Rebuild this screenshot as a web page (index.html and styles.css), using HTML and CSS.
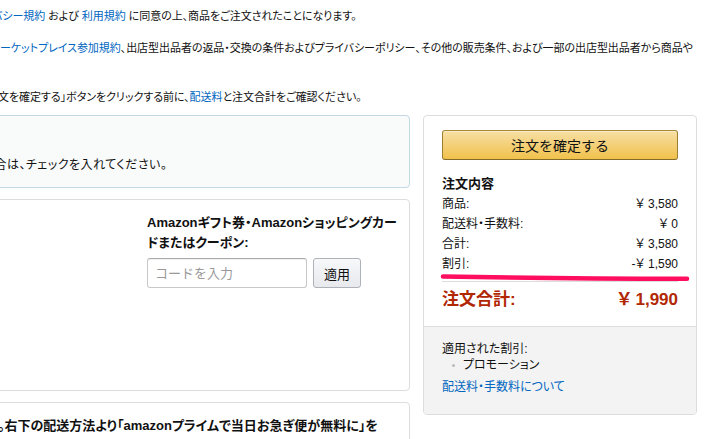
FILE: index.html
```html
<!DOCTYPE html>
<html lang="ja">
<head>
  <meta charset="UTF-8">
  <title>注文の確定</title>
  <link rel="stylesheet" href="styles.css">
</head>
<body>

<div class="page">
  <div class="notes">
    <p class="note note-first"><span class="cut">バ</span><a href="#">シー規約</a> および <a href="#">利用規約</a> に同意の上、商品をご注文されたことになります。</p>
    <p class="note note-second"><a href="#">ーケットプレイス参加規約</a>、出店型出品者の返品・交換の条件およびプライバシーポリシー、その他の販売条件、および一部の出店型出品者から商品や</p>
    <p class="note note-third">文を確定する」ボタンをクリックする前に、<a href="#">配送料</a>と注文合計をご確認ください。</p>
  </div>

  <div class="main">
    <div class="left">
      <div class="box box-info">
        <p class="info-text">場合は、チェックを入れてください。</p>
      </div>

      <div class="box box-gift">
        <div class="gift">
          <h4>Amazonギフト券・Amazonショッピングカー<br>ドまたはクーポン:</h4>
          <div class="gift-form">
            <input type="text" placeholder="コードを入力">
            <button class="btn-apply">適用</button>
          </div>
        </div>
      </div>

      <div class="box box-ship">
        <p class="ship-text">。右下の配送方法より「amazonプライムで当日お急ぎ便が無料に」を</p>
      </div>
    </div>

    <div class="summary">
      <div class="summary-top">
        <button class="btn-order">注文を確定する</button>
        <h3>注文内容</h3>
        <div class="row"><span>商品:</span><span>￥ 3,580</span></div>
        <div class="row"><span>配送料・手数料:</span><span>￥ 0</span></div>
        <div class="row"><span>合計:</span><span>￥ 3,580</span></div>
        <div class="row"><span>割引:</span><span>-￥ 1,590</span></div>
        <div class="total"><span>注文合計:</span><span>￥ 1,990</span></div>

        <!-- marker stroke drawn over the discount row -->
        <svg class="marker" width="250" height="12" viewBox="0 0 250 12">
          <path d="M3 4.5 Q 120 6.5 247 6.8" fill="none" stroke="#ff0d5f" stroke-width="4.6" stroke-linecap="round"/>
        </svg>
      </div>
      <div class="summary-bottom">
        <p>適用された割引:</p>
        <ul>
          <li>プロモーション</li>
        </ul>
        <a href="#">配送料・手数料について</a>
      </div>
    </div>
  </div>
</div>

</body>
</html>
```

FILE: styles.css
```css
body {
  margin: 0;
  font-family: "Liberation Sans", "Noto Sans CJK JP", sans-serif;
  font-size: 12px;
  font-feature-settings: "palt";
  color: #111;
  background: #fff;
  overflow: hidden;
  width: 715px;
  height: 439px;
}

a {
  color: #0066c0;
  text-decoration: none;
}

p {
  margin: 0;
}

.page {
  width: 715px;
}

/* agreement text above the boxes */
.notes {
  padding-top: 8px;
  font-size: 11px;
  letter-spacing: -0.05px;
}

.note {
  line-height: 16px;
  white-space: nowrap;
}

.note-first {
  margin-left: -8px;
}

.note-first .cut {
  color: #0066c0;
}

.note-second {
  margin-top: 16px;
}

.note-third {
  margin-top: 33px;
  margin-left: -2px;
}

.main {
  display: flex;
  gap: 13px;
  margin-top: 10px;
  align-items: flex-start;
}

.left {
  width: 430px;
  margin-left: -20px;
  display: flex;
  flex-direction: column;
  gap: 11px;
}

.box {
  border: 1px solid #ddd;
  border-radius: 4px;
  background: #fff;
  box-sizing: border-box;
}

.box-info {
  background: #f9fafa;
  border-color: #c3d9e3;
  padding: 41px 0 14px 2px;
}

.info-text {
  line-height: 16px;
  letter-spacing: 0.5px;
  text-indent: -1px;
  white-space: nowrap;
}

.box-gift {
  height: 192px;
  display: flex;
  justify-content: flex-end;
  padding: 13px 14px 0 0;
}

.gift {
  width: 248px;
}

.gift h4 {
  margin: 0 0 5px;
  font-size: 13px;
  line-height: 20px;
  font-weight: bold;
  white-space: nowrap;
}

.gift-form {
  display: flex;
  gap: 6px;
}

.gift-form input {
  width: 160px;
  height: 30px;
  box-sizing: border-box;
  border: 1px solid #c8c8c8;
  border-top-color: #aaa;
  border-radius: 3px;
  padding: 0 7px;
  font-family: inherit;
  font-size: 13px;
  box-shadow: inset 0 1px 0 rgba(0,0,0,0.05);
}

.gift-form input::placeholder {
  color: #999;
}

.btn-apply {
  width: 48px;
  height: 30px;
  border: 1px solid #adb1b8;
  border-radius: 3px;
  background: linear-gradient(to bottom, #f7f8fa, #e7e9ec);
  font-family: inherit;
  font-size: 13px;
  color: #111;
  padding: 0;
}

.box-ship {
  height: 60px;
  padding: 13px 0 0 17px;
}

.ship-text {
  font-size: 13px;
  font-weight: bold;
  line-height: 20px;
  white-space: nowrap;
}

/* order summary */
.summary {
  width: 274px;
  border: 1px solid #ddd;
  border-radius: 4px;
  box-sizing: border-box;
  overflow: hidden;
}

.summary-top {
  position: relative;
  padding: 14px 18px 14px;
}

.btn-order {
  display: block;
  width: 100%;
  height: 30px;
  border: 1px solid;
  border-color: #a88734 #9c7e31 #846a29;
  border-radius: 3px;
  background: linear-gradient(to bottom, #f7dfa5, #f0c14b);
  box-shadow: inset 0 1px 0 rgba(255,255,255,0.4);
  font-family: inherit;
  font-size: 14px;
  color: #111;
  padding: 0;
}

.summary h3 {
  margin: 14px 0 0;
  font-size: 13px;
  line-height: 20px;
  font-weight: bold;
}

.row {
  display: flex;
  justify-content: space-between;
  line-height: 20px;
}

.total {
  display: flex;
  justify-content: space-between;
  margin-top: 7px;
  border-top: 1px solid #ddd;
  padding-top: 6px;
  line-height: 24px;
  font-size: 17px;
  font-weight: bold;
  color: #b12704;
}

.marker {
  position: absolute;
  left: 16px;
  top: 156px;
}

.summary-bottom {
  background: #f3f3f3;
  border-top: 1px solid #ddd;
  padding: 14px 18px 19px;
  font-size: 12px;
  line-height: 16px;
}

.summary-bottom ul {
  margin: 0;
  padding-left: 21px;
}

.summary-bottom li {
  list-style: none;
  position: relative;
}

.summary-bottom li::before {
  content: "";
  position: absolute;
  left: -11px;
  top: 7px;
  width: 3px;
  height: 3px;
  border-radius: 50%;
  background: #bbb;
}

.summary-bottom a {
  display: block;
  margin-top: 6px;
}
```
